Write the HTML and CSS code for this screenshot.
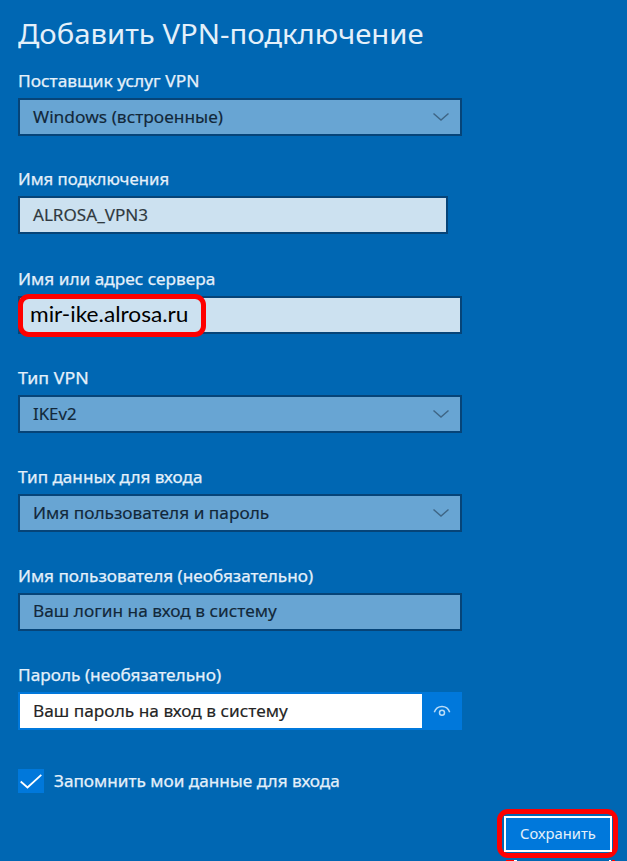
FILE: index.html
```html
<!DOCTYPE html>
<html lang="ru">
<head>
<meta charset="utf-8">
<title>Добавить VPN-подключение</title>
<link rel="stylesheet" href="styles.css">
</head>
<body>
<main class="dialog">
  <h1 class="title"><span class="t-title">Добавить VPN-подключение</span></h1>
  <section class="field field-first">
    <div class="label"><span class="l1">Поставщик услуг VPN</span></div>
    <div class="control select"><span class="v1">Windows (встроенные)</span><svg class="chevron" viewBox="0 0 18 10"><path d="M1.5 1.5 9 8 16.5 1.5"/></svg></div>
  </section>
  <section class="field field-name">
    <div class="label"><span class="l2">Имя подключения</span></div>
    <div class="control light narrow"><span class="v2">ALROSA_VPN3</span></div>
  </section>
  <section class="field">
    <div class="label"><span class="l3">Имя или адрес сервера</span></div>
    <div class="control light"><div class="highlight"><span class="v3">mir-ike.alrosa.ru</span></div></div>
  </section>
  <section class="field">
    <div class="label"><span class="l4">Тип VPN</span></div>
    <div class="control select"><span class="v4">IKEv2</span><svg class="chevron" viewBox="0 0 18 10"><path d="M1.5 1.5 9 8 16.5 1.5"/></svg></div>
  </section>
  <section class="field">
    <div class="label"><span class="l5">Тип данных для входа</span></div>
    <div class="control select"><span class="v5">Имя пользователя и пароль</span><svg class="chevron" viewBox="0 0 18 10"><path d="M1.5 1.5 9 8 16.5 1.5"/></svg></div>
  </section>
  <section class="field">
    <div class="label"><span class="l6">Имя пользователя (необязательно)</span></div>
    <div class="control raised"><span class="v6">Ваш логин на вход в систему</span></div>
  </section>
  <section class="field">
    <div class="label"><span class="l7">Пароль (необязательно)</span></div>
    <div class="control password"><span class="v7">Ваш пароль на вход в систему</span><div class="reveal"><svg class="eye" viewBox="0 0 18 12"><path d="M1.3 7.2C4 -.4 14 -.4 16.7 7.2"/><circle cx="9" cy="7.8" r="2.5"/></svg></div></div>
  </section>
  <div class="remember">
    <div class="checkbox"><svg class="check" viewBox="0 0 26 24"><path d="M2.7 12.5 9.5 18.5 23.3 5.8"/></svg></div>
    <span class="l8">Запомнить мои данные для входа</span>
  </div>
  <div class="actions"><div class="save-ring"><div class="save"><span class="t-save">Сохранить</span></div></div></div>
  <svg class="edge" viewBox="0 0 122 2"><path class="edge-red" d="M9 1h8M115 1h3"/><path class="edge-white" d="M17 1h3M112 1h2"/></svg>
</main>
</body>
</html>
```
FILE: styles.css
```css
* { box-sizing: border-box; }
body { margin: 0; background: #0067b3; }
.dialog {
  width: 627px; height: 861px; overflow: hidden; padding-left: 18px;
  font-family: "Noto Sans", "Open Sans", sans-serif; font-size: 16px; color: #e4f0fa;
}
span { display: inline-block; white-space: nowrap; transform-origin: 0 50%; }
.label span, .l8 { -webkit-text-stroke: 0.25px currentColor; }
.control > span { -webkit-text-stroke: 0.15px currentColor; }
.t-title { transform: scaleX(1.046); }
.l1 { transform: scaleX(1.085); }
.l2 { transform: scaleX(1.047); }
.l3 { transform: scaleX(1.077); }
.l4 { transform: scaleX(1.11); }
.l5 { transform: scaleX(1.07); }
.l6 { transform: scaleX(1.071); }
.l7 { transform: scaleX(1.077); }
.l8 { transform: scaleX(1.073); }
.v1 { transform: scaleX(1.085); }
.v2 { transform: scaleX(1.068); }
.v3 { transform: scaleX(1.03); }
.v4 { transform: scaleX(1.05); }
.v5 { transform: scaleX(1.078); }
.v6 { transform: scaleX(1.08); }
.v7 { transform: scaleX(1.08); }
.t-save { transform: scaleX(1.055); }
.title { margin: 0; height: 68px; padding-top: 13px; font-size: 28px; line-height: 40px; font-weight: 400; }
.field { height: 99px; }
.field-first { height: 98px; }
.field-name { height: 100px; }
.label { height: 30px; line-height: 26px; }
.control {
  width: 444px; height: 38px; display: flex; align-items: center; padding-left: 13px;
  border: 2px solid #064478; background: #68a5d3; color: #12283a; line-height: 26px;
}
.select { justify-content: space-between; padding-right: 10px; }
.raised { padding-bottom: 2px; }
.light { background: #cce1f0; color: #303940; }
.narrow { width: 430px; }
.chevron { width: 18px; height: 10px; fill: none; stroke: #3f6686; stroke-width: 1.5; }
.highlight {
  flex: none; width: 188px; height: 43px; margin-left: -15px; padding-left: 7px;
  border: 5px solid #fe0000; border-radius: 11px; background: #cce1f0;
  color: #000; font-family: Lato, "Open Sans", sans-serif; font-size: 22px; line-height: 30px;
}
.password { border-color: #0078db; background: #fff; color: #252525; justify-content: space-between; }
.reveal { width: 38px; height: 36px; flex: none; padding-left: 2px; background: #0078db; display: flex; align-items: center; justify-content: center; }
.eye { width: 18px; height: 12px; fill: none; stroke: #b9dcf7; stroke-width: 1.5; }
.remember { height: 40px; display: flex; gap: 10px; line-height: 24px; margin-top: 8px; }
.checkbox { width: 26px; height: 24px; background: #0078db; }
.check { display: block; width: 26px; height: 24px; fill: none; stroke: #fff; stroke-width: 1.8; }
.actions { display: flex; justify-content: flex-end; padding-right: 9px; }
.save-ring { width: 121px; height: 49px; border: 5px solid #fe0000; border-radius: 11px; padding: 2px 1px 1px 2px; }
.save { height: 36px; padding-bottom: 1px; border: 2px solid #fff; background: #0078db; display: flex; align-items: center; justify-content: center; font-size: 14px; }
.save .t-save { transform-origin: 50% 50%; }
.edge { display: block; width: 122px; height: 2px; margin: 2px 0 0 479px; fill: none; stroke-width: 2; }
.edge-red { stroke: #fe0000; }
.edge-white { stroke: #fff; }
```
